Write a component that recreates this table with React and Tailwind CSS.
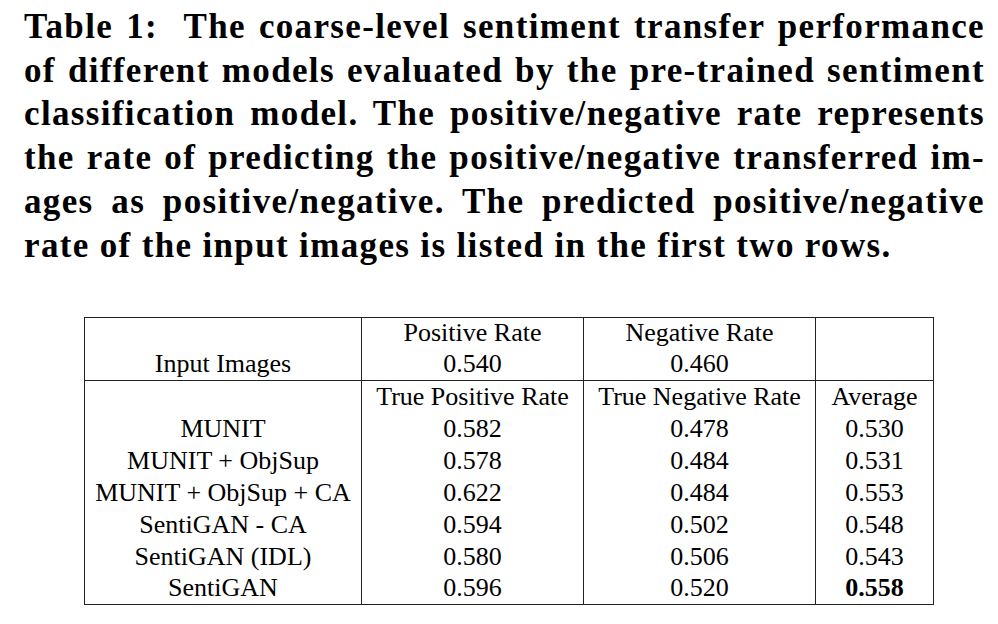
import React from "react";

const caption = [
  "Table 1:\u00a0 The coarse-level sentiment transfer performance",
  "of different models evaluated by the pre-trained sentiment",
  "classification model. The positive/negative rate represents",
  "the rate of predicting the positive/negative transferred im-",
  "ages as positive/negative. The predicted positive/negative",
];

const rows = [
  ["MUNIT", "0.582", "0.478", "0.530"],
  ["MUNIT + ObjSup", "0.578", "0.484", "0.531"],
  ["MUNIT + ObjSup + CA", "0.622", "0.484", "0.553"],
  ["SentiGAN - CA", "0.594", "0.502", "0.548"],
  ["SentiGAN (IDL)", "0.580", "0.506", "0.543"],
  ["SentiGAN", "0.596", "0.520", "0.558"],
];

function App() {
  return (
    <div className="w-[998px] h-[624px] bg-white text-black overflow-hidden font-['Liberation_Serif',serif]">
      <div className="pl-[24px] pr-[13px] pt-[5px] text-[35px] font-bold leading-[43.7px] tracking-[1.35px]">
        {caption.map((line) => (
          <div key={line} className="text-justify [text-align-last:justify] whitespace-nowrap">
            {line}
          </div>
        ))}
        <div>rate of the input images is listed in the first two rows.</div>
      </div>

      <table className="ml-[84px] mt-[50px] border-collapse border border-[#222] text-[26px] leading-none">
        <colgroup>
          <col className="w-[277px]" />
          <col className="w-[222px]" />
          <col className="w-[232px]" />
          <col className="w-[118px]" />
        </colgroup>
        <tbody>
          <tr className="h-[31px]">
            <td className="border-r border-[#222]"></td>
            <td className="border-r border-[#222] text-center">Positive Rate</td>
            <td className="border-r border-[#222] text-center">Negative Rate</td>
            <td></td>
          </tr>
          <tr className="h-[32px]">
            <td className="border-r border-[#222] text-center">Input Images</td>
            <td className="border-r border-[#222] text-center">0.540</td>
            <td className="border-r border-[#222] text-center">0.460</td>
            <td></td>
          </tr>
          <tr className="h-[32px] border-t border-[#222]">
            <td className="border-r border-[#222]"></td>
            <td className="border-r border-[#222] text-center">True Positive Rate</td>
            <td className="border-r border-[#222] text-center">True Negative Rate</td>
            <td className="text-center">Average</td>
          </tr>
          {rows.map((r, i) => (
            <tr key={r[0]} className="h-[32px]">
              <td className="border-r border-[#222] text-center">{r[0]}</td>
              <td className="border-r border-[#222] text-center">{r[1]}</td>
              <td className="border-r border-[#222] text-center">{r[2]}</td>
              <td className={"text-center" + (i === rows.length - 1 ? " font-bold" : "")}>{r[3]}</td>
            </tr>
          ))}
        </tbody>
      </table>
    </div>
  );
}

export default App;
